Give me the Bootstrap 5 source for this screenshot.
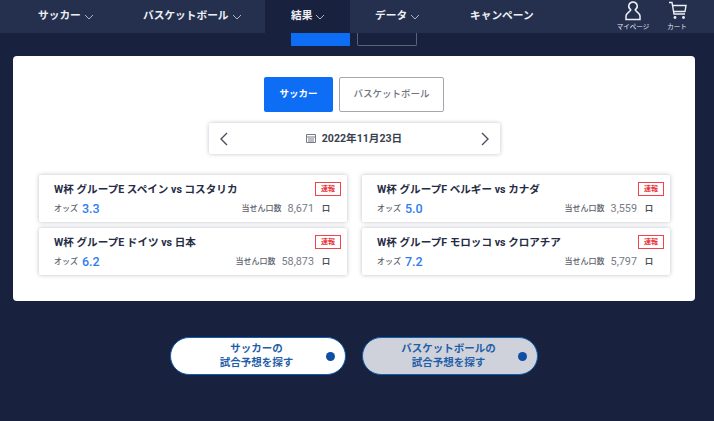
<!DOCTYPE html>
<html lang="ja">
<head>
  <meta charset="UTF-8" />
  <meta name="viewport" content="width=device-width, initial-scale=1" />
  <title>結果</title>
  <link href="https://cdn.jsdelivr.net/npm/bootstrap@5.3.3/dist/css/bootstrap.min.css" rel="stylesheet" />
  <style>
    body {
      background: #18213d;
      font-family: Roboto, "Noto Sans CJK JP", sans-serif;
      height: 421px;
      overflow: hidden;
    }
    .top-bar {
      background: #25304f;
      height: 33px;
    }
    .top-item {
      color: #eef0f5;
      font-size: 10.7px;
      font-weight: 700;
      height: 33px;
      padding-left: 25px;
      text-decoration: none;
      white-space: nowrap;
    }
    .top-item svg {
      margin-left: 3px;
    }
    .top-first { padding-left: 38px; width: 117px; }
    .top-second { padding-left: 26px; width: 148px; }
    .top-current { background: #18213d; padding-left: 26px; width: 85px; }
    .top-fourth { width: 95px; }
    .top-icon {
      color: #e6e9f0;
      font-size: 6.5px;
      line-height: 8px;
      width: 44px;
    }
    .top-icon svg {
      margin-bottom: 1px;
      margin-top: 1px;
    }
    .top-right {
      margin-right: 15px;
    }
    .behind-row {
      gap: 7px;
      height: 13px;
      margin-left: 291px;
      overflow: hidden;
    }
    .behind-blue {
      background: #0d6ef5;
      height: 13px;
      width: 59px;
    }
    .behind-line {
      border: 1px solid #5c6379;
      border-top: 0;
      border-radius: 0 0 2px 2px;
      height: 13px;
      width: 60px;
    }
    .white-panel {
      background: #fff;
      border-radius: 4px;
      height: 245px;
      margin: 10px 19px 0 13px;
      padding-top: 21px;
    }
    .sport-row {
      gap: 6px;
    }
    .sport-btn {
      border-radius: 2px;
      font-size: 9.5px;
      font-weight: 700;
      height: 35px;
      padding: 0;
    }
    .sport-on {
      background: #0d6ef5;
      color: #fff;
      width: 69px;
    }
    .sport-off {
      background: #fff;
      border: 1px solid #a4a7ae;
      color: #70737b;
      font-weight: 500;
      width: 105px;
    }
    .date-bar {
      border-radius: 2px;
      box-shadow: 0 0 4px rgba(30, 40, 70, .28);
      color: #3a3f4e;
      font-size: 10.6px;
      font-weight: 700;
      height: 31px;
      margin: 11px auto 0;
      padding: 0 10px;
      width: 291px;
    }
    .date-text {
      gap: 6px;
    }
    .match-grid {
      display: grid;
      gap: 6px 15px;
      grid-template-columns: 308px 308px;
      margin: 21px 0 0 26px;
    }
    .match-box {
      border-radius: 2px;
      box-shadow: 0 0 4px rgba(30, 40, 70, .3);
      height: 47px;
      padding: 7px 17px 0 15px;
    }
    .match-title {
      color: #262c44;
      font-size: 10.6px;
      font-weight: 700;
      line-height: 15px;
    }
    .flash-tag {
      border: 1px solid #f0444c;
      color: #e8323c;
      font-size: 7px;
      font-weight: 700;
      height: 14px;
      line-height: 12px;
      margin-right: -11px;
      text-align: center;
      width: 26px;
    }
    .odds-label, .win-label {
      color: #5b5f6b;
      font-size: 8px;
      font-weight: 500;
    }
    .odds-value {
      color: #2f7df0;
      font-size: 12.5px;
      font-weight: 500;
      margin-left: 4px;
    }
    .win-count {
      color: #777b86;
      font-size: 10.8px;
      margin-left: 6px;
    }
    .win-unit {
      color: #4b4f5b;
      font-size: 8px;
      font-weight: 700;
      margin-left: 8px;
    }
    .odds-row {
      height: 18px;
      margin-top: 3px;
    }
    .search-row {
      gap: 16px;
      margin: 36px 0 0 170px;
    }
    .search-btn {
      align-items: center;
      border: 1.5px solid #0f5fb0;
      border-radius: 19px;
      color: #1f5ea8;
      display: flex;
      font-size: 10.5px;
      font-weight: 700;
      height: 38px;
      line-height: 14.5px;
      padding: 0 10px 0 16px;
      text-align: center;
      text-decoration: none;
      width: 176px;
    }
    .search-white { background: #fff; }
    .search-grey { background: #cfd2da; }
    .search-text { flex: 1; }
    .search-dot {
      background: #104ea3;
      border-radius: 50%;
      height: 9px;
      width: 9px;
    }
  </style>
</head>
<body>
  <nav class="top-bar d-flex">
    <a href="#" class="top-item top-first d-flex align-items-center">サッカー<svg width="10" height="6" viewBox="0 0 10 6"><path d="M1 1l4 4 4-4" fill="none" stroke="#aeb4c4"/></svg></a>
    <a href="#" class="top-item top-second d-flex align-items-center">バスケットボール<svg width="10" height="6" viewBox="0 0 10 6"><path d="M1 1l4 4 4-4" fill="none" stroke="#aeb4c4"/></svg></a>
    <a href="#" class="top-item top-current d-flex align-items-center">結果<svg width="10" height="6" viewBox="0 0 10 6"><path d="M1 1l4 4 4-4" fill="none" stroke="#aeb4c4"/></svg></a>
    <a href="#" class="top-item top-fourth d-flex align-items-center">データ<svg width="10" height="6" viewBox="0 0 10 6"><path d="M1 1l4 4 4-4" fill="none" stroke="#aeb4c4"/></svg></a>
    <a href="#" class="top-item d-flex align-items-center">キャンペーン</a>
    <div class="top-right ms-auto d-flex">
      <div class="top-icon d-flex flex-column align-items-center">
        <svg width="16" height="21" viewBox="0 0 16 21"><path d="M8 1a4.2 4.2 0 0 1 2.2 7.8c.3 1.6 4.8 3.2 4.8 6.200v3.500H1V15c0-3 4.500-4.600 4.800-6.200A4.200 4.200 0 0 1 8 1z" fill="none" stroke="#eef0f5" stroke-width="1.500"/></svg>
        <span>マイページ</span>
      </div>
      <div class="top-icon d-flex flex-column align-items-center">
        <svg width="19" height="21" viewBox="0 0 19 21"><path d="M1 1.500h3l2 11.500h11M5 4.500h13l-1 6H6" fill="none" stroke="#eef0f5" stroke-width="1.400"/><circle cx="7" cy="16.500" r="1.400" fill="#eef0f5"/><circle cx="15.500" cy="16.500" r="1.400" fill="#eef0f5"/></svg>
        <span>カート</span>
      </div>
    </div>
  </nav>

  <div class="behind-row d-flex">
    <div class="behind-blue"></div>
    <div class="behind-line"></div>
  </div>

  <main class="white-panel">
    <div class="sport-row d-flex justify-content-center">
      <button class="btn sport-btn sport-on">サッカー</button>
      <button class="btn sport-btn sport-off">バスケットボール</button>
    </div>

    <div class="date-bar d-flex align-items-center justify-content-between">
      <svg width="9" height="14" viewBox="0 0 9 14"><path d="M8 1L2 7l6 6" fill="none" stroke="#4a4f5d" stroke-width="1.400"/></svg>
      <span class="date-text d-flex align-items-center">
        <svg width="10" height="10" viewBox="0 0 10 10"><path d="M.500 1.500h9v8h-9zM.500 4h9M2 6h6M2 8h6" fill="none" stroke="#777b86"/></svg>
        2022年11月23日
      </span>
      <svg width="9" height="14" viewBox="0 0 9 14"><path d="M1 1l6 6-6 6" fill="none" stroke="#4a4f5d" stroke-width="1.400"/></svg>
    </div>

    <div class="match-grid">
      <div class="match-box">
        <div class="d-flex justify-content-between"><span class="match-title">W杯 グループE スペイン vs コスタリカ</span><span class="flash-tag">速報</span></div>
        <div class="odds-row d-flex justify-content-between align-items-center">
          <span class="d-flex align-items-center"><span class="odds-label">オッズ</span><span class="odds-value">3.3</span></span>
          <span class="d-flex align-items-center"><span class="win-label">当せん口数</span><span class="win-count">8,671</span><span class="win-unit">口</span></span>
        </div>
      </div>
      <div class="match-box">
        <div class="d-flex justify-content-between"><span class="match-title">W杯 グループF ベルギー vs カナダ</span><span class="flash-tag">速報</span></div>
        <div class="odds-row d-flex justify-content-between align-items-center">
          <span class="d-flex align-items-center"><span class="odds-label">オッズ</span><span class="odds-value">5.0</span></span>
          <span class="d-flex align-items-center"><span class="win-label">当せん口数</span><span class="win-count">3,559</span><span class="win-unit">口</span></span>
        </div>
      </div>
      <div class="match-box">
        <div class="d-flex justify-content-between"><span class="match-title">W杯 グループE ドイツ vs 日本</span><span class="flash-tag">速報</span></div>
        <div class="odds-row d-flex justify-content-between align-items-center">
          <span class="d-flex align-items-center"><span class="odds-label">オッズ</span><span class="odds-value">6.2</span></span>
          <span class="d-flex align-items-center"><span class="win-label">当せん口数</span><span class="win-count">58,873</span><span class="win-unit">口</span></span>
        </div>
      </div>
      <div class="match-box">
        <div class="d-flex justify-content-between"><span class="match-title">W杯 グループF モロッコ vs クロアチア</span><span class="flash-tag">速報</span></div>
        <div class="odds-row d-flex justify-content-between align-items-center">
          <span class="d-flex align-items-center"><span class="odds-label">オッズ</span><span class="odds-value">7.2</span></span>
          <span class="d-flex align-items-center"><span class="win-label">当せん口数</span><span class="win-count">5,797</span><span class="win-unit">口</span></span>
        </div>
      </div>
    </div>
  </main>

  <div class="search-row d-flex">
    <a href="#" class="search-btn search-white"><span class="search-text">サッカーの<br>試合予想を探す</span><span class="search-dot"></span></a>
    <a href="#" class="search-btn search-grey"><span class="search-text">バスケットボールの<br>試合予想を探す</span><span class="search-dot"></span></a>
  </div>

  <script src="https://cdn.jsdelivr.net/npm/bootstrap@5.3.3/dist/js/bootstrap.bundle.min.js"></script>
</body>
</html>
